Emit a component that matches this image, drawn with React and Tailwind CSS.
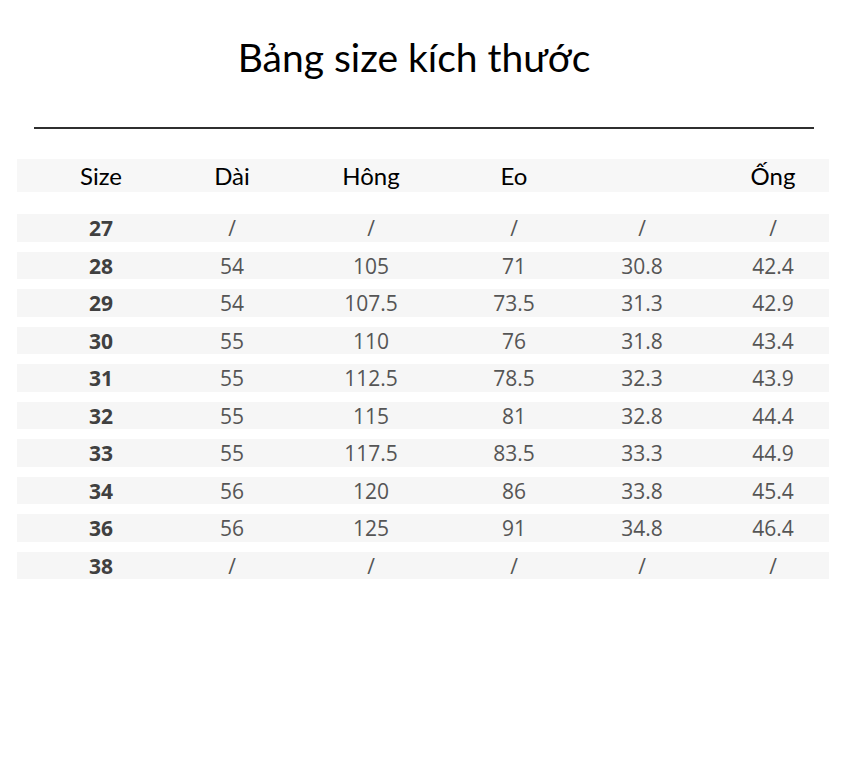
const COLS = ['Size', 'Dài', 'Hông', 'Eo', '', 'Ống']

const ROWS = [
  ['27', '/', '/', '/', '/', '/'],
  ['28', '54', '105', '71', '30.8', '42.4'],
  ['29', '54', '107.5', '73.5', '31.3', '42.9'],
  ['30', '55', '110', '76', '31.8', '43.4'],
  ['31', '55', '112.5', '78.5', '32.3', '43.9'],
  ['32', '55', '115', '81', '32.8', '44.4'],
  ['33', '55', '117.5', '83.5', '33.3', '44.9'],
  ['34', '56', '120', '86', '33.8', '45.4'],
  ['36', '56', '125', '91', '34.8', '46.4'],
  ['38', '/', '/', '/', '/', '/'],
]

// column widths picked so each column's centre sits where the picture has it
const GRID = 'grid grid-cols-[168px_94px_184px_102px_154px_108px]'

export default function App() {
  return (
    <div className="w-[848px] h-[764px] bg-white font-['Lato',sans-serif]">
      <h1 className="pt-[32px] pr-[20px] text-center text-[39px] leading-[50px] text-black font-normal">
        Bảng size kích thước
      </h1>

      <div className="mt-[45px] mx-[34px] h-[2px] bg-[#2f2f2f]" />

      <div className="mt-[30px] mx-[17px] w-[812px]">
        {/* header */}
        <div className={`${GRID} h-[33px] items-center bg-[#f7f7f7] text-[24px] text-black`}>
          {COLS.map((c, i) => (
            <span key={i} className="text-center leading-none">{c}</span>
          ))}
        </div>

        {/* rows */}
        <div className="mt-[22px] flex flex-col gap-[10px] font-['Open_Sans',sans-serif] text-[21px] text-[#555]">
          {ROWS.map((row) => (
            <div key={row[0]} className={`${GRID} h-[27.5px] items-center bg-[#f6f6f6]`}>
              {row.map((v, i) => (
                <span
                  key={i}
                  className={`text-center leading-none pt-[2px] ${i === 0 ? 'font-bold text-[#404040]' : ''}`}
                >
                  {v}
                </span>
              ))}
            </div>
          ))}
        </div>
      </div>
    </div>
  )
}
